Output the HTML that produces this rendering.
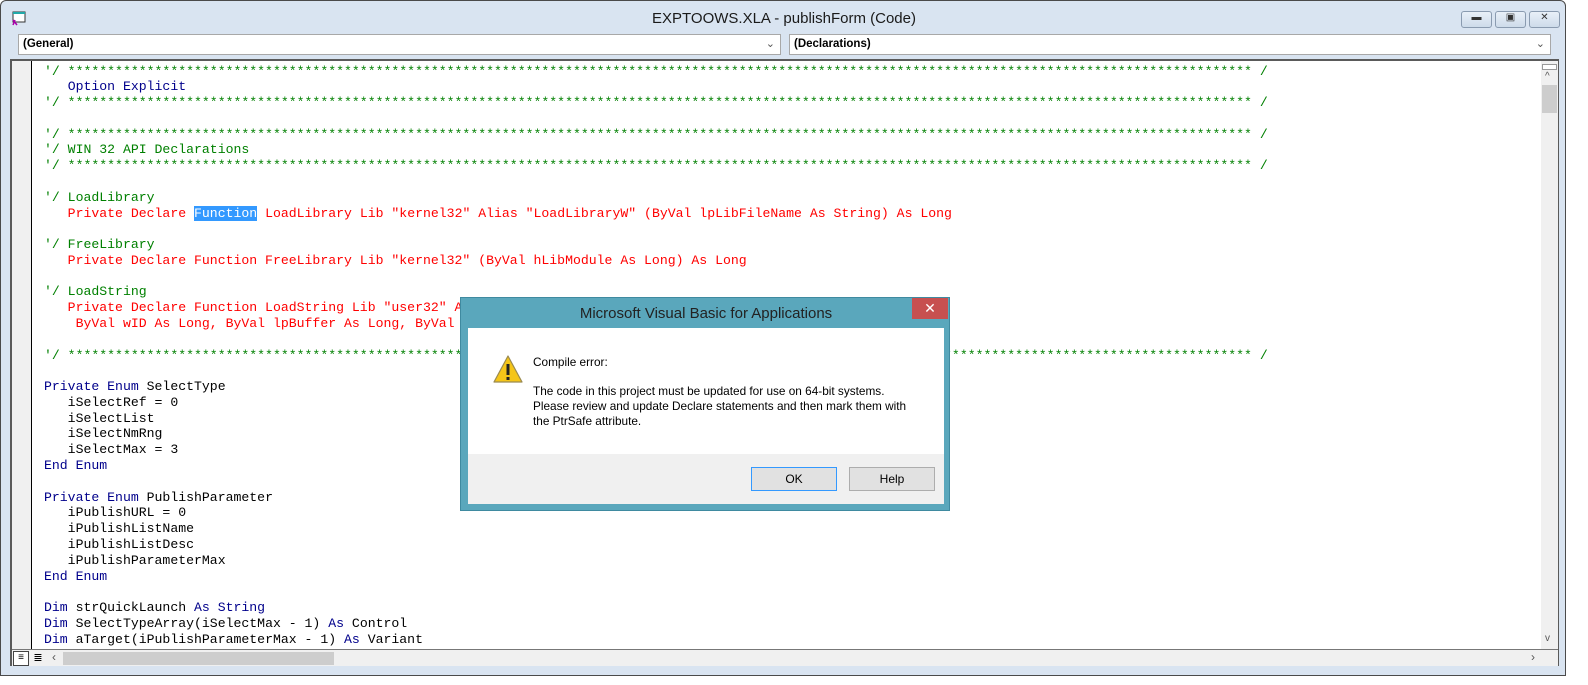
<!DOCTYPE html>
<html><head><meta charset="utf-8"><style>
*{margin:0;padding:0;box-sizing:border-box}
body{width:1588px;height:685px;overflow:hidden;background:#fff;font-family:"Liberation Sans",sans-serif;position:relative}
.abs{position:absolute}
#win{left:0;top:0;width:1566px;height:676px;border:1px solid #4a4a4a;background:#d9e4f1;border-radius:6px 6px 0 0}
#title{left:0;top:9px;width:1566px;text-align:center;font-size:15px;color:#1a1a1a}
.cb{top:33px;height:21px;background:#fff;border:1px solid #a8a8a8;font-size:11.5px;font-weight:bold;padding:3px 0 0 4px;color:#000}
.cb i{position:absolute;right:5px;top:2px;font-style:normal;font-weight:normal;color:#555;font-size:11px}
#code{left:9px;top:58px;width:1549px;height:607px;border:1px solid #5a5a5a;border-width:2px 1px 1px 2px;background:#fff}
#margin{left:0;top:0;width:20px;height:588px;background:#f0f0f0;border-right:1px solid #000}
pre{position:absolute;left:32px;top:2.5px;font-family:"Liberation Mono",monospace;font-size:13.17px;line-height:15.78px;color:#000}
.g{color:#008000}.b{color:#00008b}.r{color:#f00}
.sel{background:#3399ff;color:#fff}
#vs{right:0;top:0;width:17px;height:588px;background:#f0f0f0}
#hs{left:0;top:588px;width:1546px;height:17px;background:#f0f0f0;border-top:1px solid #777}
.btn{top:10px;height:17px;border:1px solid #8a9bb0;border-radius:3px;background:linear-gradient(#e9f0f8,#cddbea);font-size:10px;text-align:center;color:#333}
#dlg{left:460px;top:297px;width:490px;height:214px;background:#5aa7bc;border:1px solid #3f8aa0}
#dt{left:0;top:7px;width:490px;text-align:center;font-size:15px;color:#222}
#dx{left:451px;top:0px;width:36px;height:21px;background:#c75050;color:#fff;text-align:center;font-size:14px;line-height:20px}
#dc{left:7px;top:30px;width:476px;height:176px;background:#f0f0f0}
#dw{left:0;top:0;width:476px;height:126px;background:#fff}
.msg{font-size:11.8px;color:#000;line-height:15px}
.pb{top:139px;height:24px;width:86px;border:1px solid #adadad;background:#e1e1e1;text-align:center;font-size:12px;line-height:22px}
</style></head><body>
<div id="win" class="abs">
<svg class="abs" style="left:9px;top:10px" width="18" height="16"><rect x="3" y="1" width="12" height="10" fill="#fff" stroke="#333"/><rect x="3" y="1" width="12" height="2" fill="#2aa"/><path d="M3 9 L7 14 M5 9 L3 14" stroke="#a0a" stroke-width="1.5"/></svg>
<div id="title" class="abs">EXPTOOWS.XLA - publishForm (Code)</div>
<div class="btn abs" style="left:1460px;width:31px">▬</div>
<div class="btn abs" style="left:1494px;width:31px">▣</div>
<div class="btn abs" style="left:1528px;width:31px">✕</div>
<div class="cb abs" style="left:17px;width:763px">(General)<i>⌄</i></div>
<div class="cb abs" style="left:788px;width:762px">(Declarations)<i>⌄</i></div>
<div id="code" class="abs">
<div id="margin" class="abs"></div>
<pre><span class="g">'/ ****************************************************************************************************************************************************** /</span>
   <span class="b">Option Explicit</span>
<span class="g">'/ ****************************************************************************************************************************************************** /</span>

<span class="g">'/ ****************************************************************************************************************************************************** /</span>
<span class="g">'/ WIN 32 API Declarations</span>
<span class="g">'/ ****************************************************************************************************************************************************** /</span>

<span class="g">'/ LoadLibrary</span>
<span class="r">   Private Declare <span class="sel">Function</span> LoadLibrary Lib "kernel32" Alias "LoadLibraryW" (ByVal lpLibFileName As String) As Long</span>

<span class="g">'/ FreeLibrary</span>
<span class="r">   Private Declare Function FreeLibrary Lib "kernel32" (ByVal hLibModule As Long) As Long</span>

<span class="g">'/ LoadString</span>
<span class="r">   Private Declare Function LoadString Lib "user32" Alias "LoadStringW" (ByVal hInstance As Long, _</span>
<span class="r">    ByVal wID As Long, ByVal lpBuffer As Long, ByVal nBufferMax As Long) As Long</span>

<span class="g">'/ ****************************************************************************************************************************************************** /</span>

<span class="b">Private Enum</span> SelectType
   iSelectRef = 0
   iSelectList
   iSelectNmRng
   iSelectMax = 3
<span class="b">End Enum</span>

<span class="b">Private Enum</span> PublishParameter
   iPublishURL = 0
   iPublishListName
   iPublishListDesc
   iPublishParameterMax
<span class="b">End Enum</span>

<span class="b">Dim</span> strQuickLaunch <span class="b">As String</span>
<span class="b">Dim</span> SelectTypeArray(iSelectMax - 1) <span class="b">As</span> Control
<span class="b">Dim</span> aTarget(iPublishParameterMax - 1) <span class="b">As</span> Variant</pre>
<div id="vs" class="abs"><div class="abs" style="left:1px;top:3px;width:15px;height:6px;border:1px solid #999;background:#fff"></div><div class="abs" style="left:4px;top:10px;font-size:10px;color:#555">^</div><div class="abs" style="left:1px;top:24px;width:15px;height:28px;background:#cdcdcd"></div><div class="abs" style="left:4px;top:572px;font-size:10px;color:#555">v</div></div>
<div id="hs" class="abs"><div class="abs" style="left:1px;top:1px;width:16px;height:15px;border:1px solid #444;background:#fff;font-size:10px;text-align:center">≡</div><div class="abs" style="left:18px;top:1px;width:16px;height:15px;font-size:11px;text-align:center">≣</div><div class="abs" style="left:40px;top:0;font-size:12px;color:#555">‹</div><div class="abs" style="left:51px;top:2px;width:271px;height:13px;background:#cdcdcd"></div><div class="abs" style="left:1519px;top:0;font-size:12px;color:#555">›</div></div>
</div>
</div>
<div id="dlg" class="abs">
<div id="dt" class="abs">Microsoft Visual Basic for Applications</div>
<div id="dx" class="abs">✕</div>
<div id="dc" class="abs">
<div id="dw" class="abs">
<svg class="abs" style="left:24px;top:26px" width="32" height="30"><path d="M16 2 L30 28 L2 28 Z" fill="#f5c518" stroke="#9a8a50" stroke-width="1.2" stroke-linejoin="round"/><rect x="14.5" y="10" width="3" height="11" fill="#222"/><rect x="14.5" y="23" width="3" height="3" fill="#222"/></svg>
<div class="abs msg" style="left:65px;top:27px">Compile error:</div>
<div class="abs msg" style="left:65px;top:56px">The code in this project must be updated for use on 64-bit systems.<br>Please review and update Declare statements and then mark them with<br>the PtrSafe attribute.</div>
</div>
<div class="pb abs" style="left:283px;border-color:#3399ff">OK</div>
<div class="pb abs" style="left:381px">Help</div>
</div>
</div>
</body></html>
